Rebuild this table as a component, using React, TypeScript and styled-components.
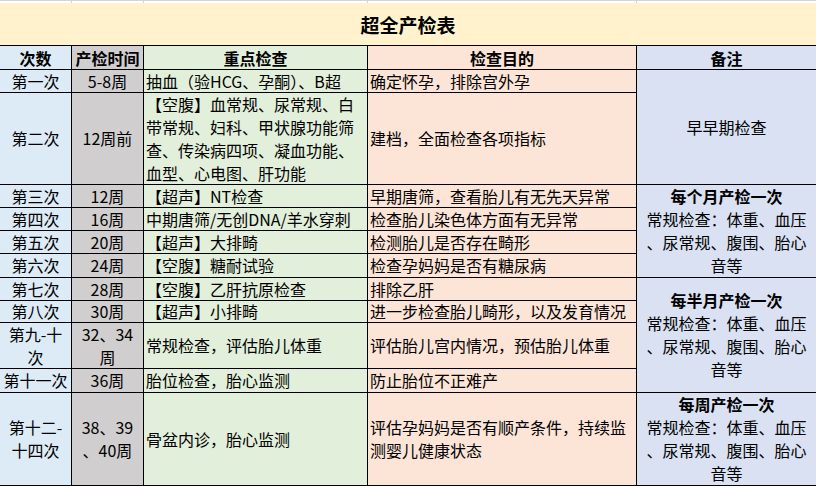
import React from 'react';
import styled, { createGlobalStyle } from 'styled-components';

const Global = createGlobalStyle`
  html, body { margin: 0; padding: 0; background: #ffffff; }
  body {
    font-family: "Noto Sans CJK SC", "Noto Sans", sans-serif;
    color: #000;
    width: 816px;
    overflow: hidden;
  }
`;

const COLS = [71, 71, 223, 268, 179];
const BG = ['#DDEBF7', '#D0CECE', '#E2EFDA', '#FCE4D6', '#D9E1F2'];

const SheetEdge = styled.div`
  display: flex;
  height: 2px;
  border-top: 1px solid #d4d4d4;
`;

const EdgeCell = styled.div<{ $w: number }>`
  width: ${(p) => p.$w}px;
  flex: none;
  border-right: 1px solid #d4d4d4;
`;

const Grid = styled.div`
  display: grid;
  grid-template-columns: ${COLS.map((c) => `${c}px`).join(' ')};
  grid-template-rows: 42px 23px 22px 91px 22px 22px 22px 23px 22px 21px 45px 23px 92px;
  gap: 1px;
  background: #000;
  padding-bottom: 1px;
`;

const Title = styled.div`
  grid-column: 1 / span 5;
  grid-row: 1;
  background: #fff2cc;
  display: flex;
  align-items: center;
  justify-content: center;
  font-size: 19px;
  font-weight: 700;
`;

const Cell = styled.div<{ $col: number; $row: number; $span?: number; $left?: boolean }>`
  grid-column: ${(p) => p.$col};
  grid-row: ${(p) => p.$row} / span ${(p) => p.$span ?? 1};
  background: ${(p) => BG[p.$col - 1]};
  display: flex;
  flex-direction: column;
  justify-content: center;
  align-items: ${(p) => (p.$left ? 'flex-start' : 'center')};
  padding: 0 2px;
  font-size: 16px;
  line-height: 23px;
  min-height: 0;
  overflow: visible;
`;

const HeadCell = styled(Cell)`
  font-weight: 700;
  line-height: 22px;
`;

const Line = styled.span<{ $bold?: boolean }>`
  display: block;
  white-space: nowrap;
  font-weight: ${(p) => (p.$bold ? 700 : 400)};
`;

type Row = { n: string[]; t: string[]; k: string[]; p: string[] };

const rows: Row[] = [
  { n: ['第一次'], t: ['5-8周'], k: ['抽血（验HCG、孕酮）、B超'], p: ['确定怀孕，排除宫外孕'] },
  {
    n: ['第二次'],
    t: ['12周前'],
    k: ['【空腹】血常规、尿常规、白', '带常规、妇科、甲状腺功能筛', '查、传染病四项、凝血功能、', '血型、心电图、肝功能'],
    p: ['建档，全面检查各项指标'],
  },
  { n: ['第三次'], t: ['12周'], k: ['【超声】NT检查'], p: ['早期唐筛，查看胎儿有无先天异常'] },
  { n: ['第四次'], t: ['16周'], k: ['中期唐筛/无创DNA/羊水穿刺'], p: ['检查胎儿染色体方面有无异常'] },
  { n: ['第五次'], t: ['20周'], k: ['【超声】大排畸'], p: ['检测胎儿是否存在畸形'] },
  { n: ['第六次'], t: ['24周'], k: ['【空腹】糖耐试验'], p: ['检查孕妈妈是否有糖尿病'] },
  { n: ['第七次'], t: ['28周'], k: ['【空腹】乙肝抗原检查'], p: ['排除乙肝'] },
  { n: ['第八次'], t: ['30周'], k: ['【超声】小排畸'], p: ['进一步检查胎儿畸形，以及发育情况'] },
  { n: ['第九-十', '次'], t: ['32、34', '周'], k: ['常规检查，评估胎儿体重'], p: ['评估胎儿宫内情况，预估胎儿体重'] },
  { n: ['第十一次'], t: ['36周'], k: ['胎位检查，胎心监测'], p: ['防止胎位不正难产'] },
  {
    n: ['第十二-', '十四次'],
    t: ['38、39', '、40周'],
    k: ['骨盆内诊，胎心监测'],
    p: ['评估孕妈妈是否有顺产条件，持续监', '测婴儿健康状态'],
  },
];

const routine = ['常规检查：体重、血压', '、尿常规、腹围、胎心', '音等'];

const notes: { row: number; span: number; head?: string; lines: string[] }[] = [
  { row: 3, span: 2, lines: ['早早期检查'] },
  { row: 5, span: 4, head: '每个月产检一次', lines: routine },
  { row: 9, span: 4, head: '每半月产检一次', lines: routine },
  { row: 13, span: 1, head: '每周产检一次', lines: routine },
];

const headers = ['次数', '产检时间', '重点检查', '检查目的', '备注'];

const Lines = ({ items }: { items: string[] }) => (
  <>
    {items.map((s, i) => (
      <Line key={i}>{s}</Line>
    ))}
  </>
);

export default function App() {
  return (
    <>
      <Global />
      <SheetEdge>
        {COLS.map((w, i) => (
          <EdgeCell key={i} $w={w} />
        ))}
      </SheetEdge>
      <Grid>
        <Title>超全产检表</Title>
        {headers.map((h, i) => (
          <HeadCell key={h} $col={i + 1} $row={2}>
            {h}
          </HeadCell>
        ))}
        {rows.map((r, i) => {
          const row = i + 3;
          return (
            <React.Fragment key={i}>
              <Cell $col={1} $row={row}>
                <Lines items={r.n} />
              </Cell>
              <Cell $col={2} $row={row}>
                <Lines items={r.t} />
              </Cell>
              <Cell $col={3} $row={row} $left>
                <Lines items={r.k} />
              </Cell>
              <Cell $col={4} $row={row} $left>
                <Lines items={r.p} />
              </Cell>
            </React.Fragment>
          );
        })}
        {notes.map((n) => (
          <Cell key={n.row} $col={5} $row={n.row} $span={n.span}>
            {n.head && <Line $bold>{n.head}</Line>}
            <Lines items={n.lines} />
          </Cell>
        ))}
      </Grid>
    </>
  );
}
